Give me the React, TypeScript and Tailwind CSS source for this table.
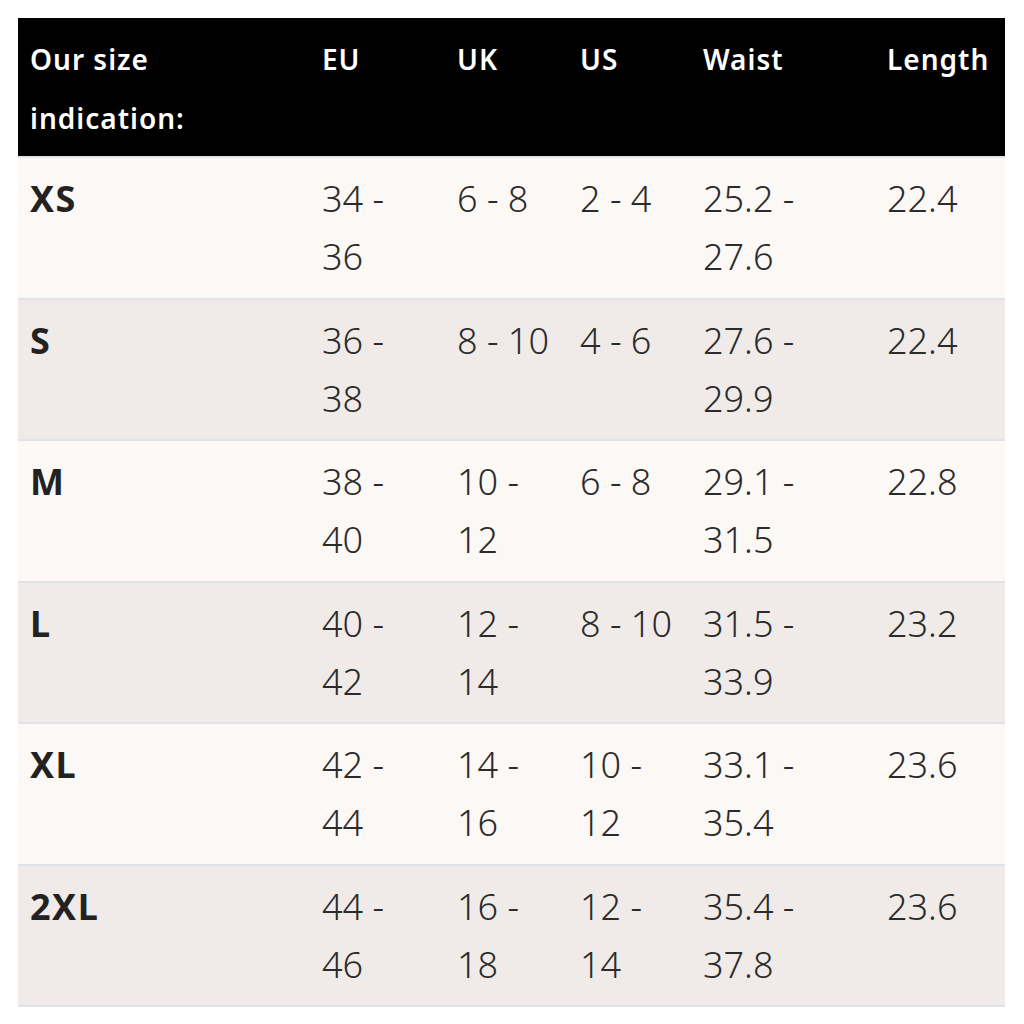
import React from "react";

type Row = {
  size: string;
  cells: string[][];
};

const columns = [
  { key: "size", label: ["Our size", "indication:"], width: "w-[292px]" },
  { key: "eu", label: ["EU"], width: "w-[135px]" },
  { key: "uk", label: ["UK"], width: "w-[123px]" },
  { key: "us", label: ["US"], width: "w-[123px]" },
  { key: "waist", label: ["Waist"], width: "w-[184px]" },
  { key: "length", label: ["Length"], width: "w-[130px]" },
];

const rows: Row[] = [
  { size: "XS", cells: [["34 -", "36"], ["6 - 8"], ["2 - 4"], ["25.2 -", "27.6"], ["22.4"]] },
  { size: "S", cells: [["36 -", "38"], ["8 - 10"], ["4 - 6"], ["27.6 -", "29.9"], ["22.4"]] },
  { size: "M", cells: [["38 -", "40"], ["10 -", "12"], ["6 - 8"], ["29.1 -", "31.5"], ["22.8"]] },
  { size: "L", cells: [["40 -", "42"], ["12 -", "14"], ["8 - 10"], ["31.5 -", "33.9"], ["23.2"]] },
  { size: "XL", cells: [["42 -", "44"], ["14 -", "16"], ["10 -", "12"], ["33.1 -", "35.4"], ["23.6"]] },
  { size: "2XL", cells: [["44 -", "46"], ["16 -", "18"], ["12 -", "14"], ["35.4 -", "37.8"], ["23.6"]] },
];

const Lines: React.FC<{ lines: string[] }> = ({ lines }) => (
  <>
    {lines.map((line, i) => (
      <div key={i} className="whitespace-nowrap">
        {line}
      </div>
    ))}
  </>
);

export default function App() {
  return (
    <div
      className="w-[1024px] h-[1024px] bg-white pt-[18px] pl-[18px]"
      style={{ fontFamily: '"Noto Sans", "DejaVu Sans", sans-serif' }}
    >
      <div className="w-[987px]">
        {/* header */}
        <div className="flex h-[138px] bg-black text-white font-semibold text-[28px] leading-[59px] tracking-[1px]">
          {columns.map((col) => (
            <div key={col.key} className={`${col.width} shrink-0 px-3 pt-[12px]`}>
              <Lines lines={col.label} />
            </div>
          ))}
        </div>

        {rows.map((row, i) => (
          <div
            key={row.size}
            className={`flex h-[141.5px] border-t-2 border-[#dfe2e8] text-[36px] leading-[58px] ${
              i % 2 === 0 ? "bg-[#fcf8f6]" : "bg-[#f0ebe9]"
            } ${i === rows.length - 1 ? "border-b-2 h-[143.5px]" : ""}`}
          >
            <div className="w-[292px] shrink-0 px-3 pt-[12px] font-bold tracking-[1.5px] text-[#222222]">
              {row.size}
            </div>
            {row.cells.map((cell, j) => (
              <div
                key={j}
                className={`${columns[j + 1].width} shrink-0 px-3 pt-[12px] font-light text-[#2b2b2b]`}
              >
                <Lines lines={cell} />
              </div>
            ))}
          </div>
        ))}
      </div>
    </div>
  );
}
